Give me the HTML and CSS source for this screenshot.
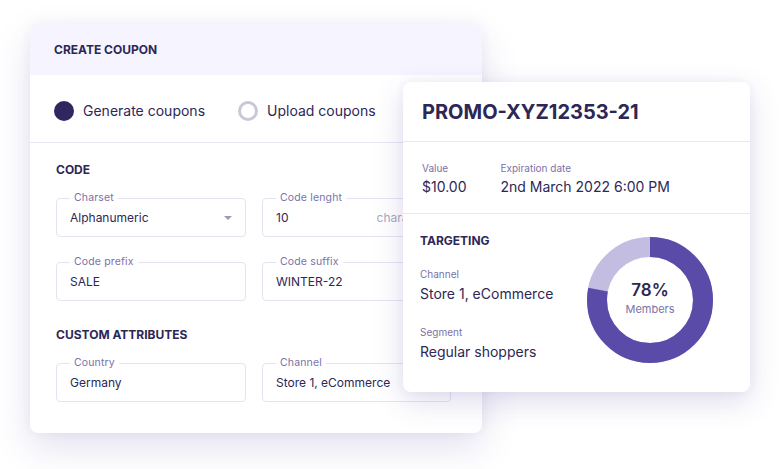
FILE: index.html
```html
<!DOCTYPE html>
<html>
<head>
<meta charset="utf-8">
<link rel="stylesheet" href="styles.css">
</head>
<body>
<div class="stage">
  <div class="coupon-card">
    <div class="coupon-head">CREATE COUPON</div>
    <div class="radio-row">
      <div class="radio"><span class="dot dot-on"></span>Generate coupons</div>
      <div class="radio"><span class="dot dot-off"></span>Upload coupons</div>
    </div>
    <div class="coupon-body">
      <div class="section-title">CODE</div>
      <div class="field-grid">
        <div class="field"><span class="flabel">Charset</span><span class="fval">Alphanumeric</span><span class="caret"></span></div>
        <div class="field"><span class="flabel">Code lenght</span><span class="fval">10</span><span class="suffix">characters</span></div>
      </div>
      <div class="field-grid row2">
        <div class="field"><span class="flabel">Code prefix</span><span class="fval">SALE</span></div>
        <div class="field"><span class="flabel">Code suffix</span><span class="fval">WINTER-22</span></div>
      </div>
      <div class="section-title attrs">CUSTOM ATTRIBUTES</div>
      <div class="field-grid">
        <div class="field"><span class="flabel">Country</span><span class="fval">Germany</span></div>
        <div class="field"><span class="flabel">Channel</span><span class="fval">Store 1, eCommerce</span></div>
      </div>
    </div>
  </div>

  <div class="promo-card">
    <div class="promo-head">PROMO-XYZ12353-21</div>
    <div class="promo-info">
      <div class="info-col">
        <div class="plabel">Value</div>
        <div class="pval">$10.00</div>
      </div>
      <div class="info-col">
        <div class="plabel">Expiration date</div>
        <div class="pval">2nd March 2022 6:00 PM</div>
      </div>
    </div>
    <div class="promo-target">
      <div class="target-text">
        <div class="section-title">TARGETING</div>
        <div class="plabel t1">Channel</div>
        <div class="pval">Store 1, eCommerce</div>
        <div class="plabel t2">Segment</div>
        <div class="pval">Regular shoppers</div>
      </div>
      <div class="donut">
        <svg width="128" height="128" viewBox="0 0 128 128">
          <circle cx="64" cy="64" r="53" fill="none" stroke="#c3bde2" stroke-width="20"/>
          <circle cx="64" cy="64" r="53" fill="none" stroke="#5b4ba9" stroke-width="20"
            stroke-dasharray="259.75 333.01" transform="rotate(-90 64 64)"/>
        </svg>
        <div class="donut-center">
          <div class="pct">78%</div>
          <div class="members">Members</div>
        </div>
      </div>
    </div>
  </div>
</div>
</body>
</html>
```

FILE: styles.css
```css
* { box-sizing: border-box; }
html, body {
  margin: 0;
  padding: 0;
  background: #ffffff;
}
body {
  font-family: Inter, "Noto Sans", "Liberation Sans", sans-serif;
  color: #2d2756;
  width: 780px;
  height: 469px;
  overflow: hidden;
}
.stage {
  position: relative;
  padding: 24px 0 0 30px;
}
.coupon-card {
  width: 452px;
  height: 409px;
  background: #fff;
  border-radius: 8px;
  box-shadow: 0 14px 36px rgba(70, 50, 150, 0.15), 0 0 12px rgba(70, 50, 150, 0.05);
  overflow: hidden;
}
.coupon-head {
  height: 51px;
  background: #f6f4fe;
  padding-left: 24px;
  display: flex;
  align-items: center;
  font-size: 12px;
  font-weight: 700;
  color: #2d2756;
}
.radio-row {
  height: 68px;
  border-bottom: 1px solid #e9e7f1;
  display: flex;
  align-items: center;
  padding: 4px 0 0 24px;
  gap: 33px;
}
.radio {
  display: flex;
  align-items: center;
  gap: 9px;
  font-size: 14px;
  color: #2d2756;
}
.dot {
  width: 20px;
  height: 20px;
  border-radius: 50%;
  display: inline-block;
}
.dot-on { background: #2e2760; }
.dot-off { border: 3px solid #cac7d9; background: #fff; }
.coupon-body {
  padding: 19px 0 0 26px;
}
.section-title {
  font-size: 12px;
  font-weight: 700;
  line-height: 16px;
  color: #2d2756;
}
.field-grid {
  display: grid;
  grid-template-columns: 190px 189px;
  column-gap: 16px;
  margin-top: 20px;
}
.field-grid.row2 { margin-top: 25px; }
.section-title.attrs { margin-top: 26px; }
.field {
  position: relative;
  height: 39px;
  border: 1px solid #e6e3f0;
  border-radius: 4px;
  display: flex;
  align-items: center;
  padding: 0 13px 0 13px;
  font-size: 12px;
  color: #2d2756;
}
.fval { flex: 1; }
.flabel {
  position: absolute;
  left: 13px;
  top: -7px;
  padding: 0 4px;
  background: #fff;
  font-size: 10.5px;
  line-height: 12px;
  letter-spacing: 0.15px;
  color: #7b72a8;
}
.caret {
  width: 0;
  height: 0;
  border-left: 4px solid transparent;
  border-right: 4px solid transparent;
  border-top: 4px solid #9e99b6;
  margin-right: 0;
}
.suffix { color: #aba7be; }

.promo-card {
  position: absolute;
  left: 403px;
  top: 82px;
  width: 347px;
  height: 310px;
  background: #fff;
  border-radius: 8px;
  box-shadow: 0 10px 30px rgba(70, 50, 150, 0.17), 0 0 10px rgba(70, 50, 150, 0.06);
}
.promo-head {
  height: 60px;
  padding: 0 0 0 19px;
  display: flex;
  align-items: center;
  font-size: 20px;
  font-weight: 700;
  color: #2d2756;
  border-bottom: 1px solid #e8e6f0;
}
.promo-info {
  height: 72px;
  padding: 19px 0 0 19px;
  display: flex;
  gap: 34px;
  border-bottom: 1px solid #e8e6f0;
}
.plabel {
  font-size: 10px;
  line-height: 14px;
  color: #7b72a8;
}
.pval {
  font-size: 14px;
  line-height: 20px;
  margin-top: 2px;
  color: #2d2756;
}
.promo-target {
  display: flex;
  justify-content: space-between;
  padding: 19px 36px 0 17px;
}
.target-text .pval { margin-top: 3px; }
.plabel.t1 { margin-top: 18px; }
.plabel.t2 { margin-top: 21px; }
.donut {
  display: grid;
  margin-top: 3px;
  width: 128px;
  height: 128px;
}
.donut svg, .donut-center { grid-area: 1 / 1; }
.donut-center {
  display: flex;
  flex-direction: column;
  align-items: center;
  justify-content: center;
  padding-bottom: 5px;
}
.pct {
  font-size: 17px;
  font-weight: 600;
  line-height: 20px;
  color: #2d2756;
}
.members {
  font-size: 11px;
  line-height: 14px;
  margin-top: 2px;
  color: #7b72a8;
}
```
